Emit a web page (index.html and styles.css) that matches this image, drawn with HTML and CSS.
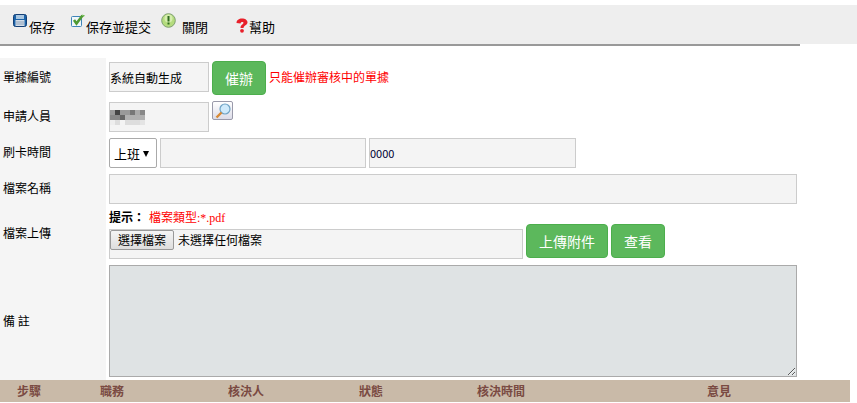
FILE: index.html
```html
<!DOCTYPE html>
<html lang="zh-Hant">
<head>
<meta charset="utf-8">
<title>單據</title>
<link rel="stylesheet" href="styles.css">
</head>
<body>
<div class="toolbar">
  <a class="tool tool-save">
    <svg class="ico" width="14" height="13" viewBox="0 0 14 13"><rect x="0.500" y="0.500" width="13" height="12" rx="2" fill="#1a62a8" stroke="#143f75"/><rect x="3" y="1" width="8" height="4" fill="#a9c6e0"/><rect x="2.500" y="6" width="9" height="6" fill="#d3dde8"/><path d="M3 8h8M3 10h8" stroke="#8ea2ba"/></svg><span>保存</span>
  </a>
  <a class="tool tool-submit">
    <svg class="ico" width="14" height="13" viewBox="0 0 14 13"><rect x="0.500" y="2.500" width="10" height="10" rx="1" fill="#f1f7fb" stroke="#3f85b8"/><path d="M3 6l2.500 3.500L11.500 1.500" fill="none" stroke="#4f9a32" stroke-width="2.600"/><path d="M11 0.500L14 1.500 12.500 3z" fill="#6bbb4a"/></svg><span>保存並提交</span>
  </a>
  <a class="tool tool-close">
    <svg class="ico" width="15" height="15" viewBox="0 0 15 15"><circle cx="7.500" cy="7.500" r="6.800" fill="#b4dc7e" stroke="#7f9f70"/><circle cx="7.500" cy="5.500" r="4" fill="#d5edae"/><rect x="6.500" y="3" width="2" height="5.500" fill="#2f6b1e"/><rect x="6.500" y="9.500" width="2" height="2" fill="#2f6b1e"/></svg><span>關閉</span>
  </a>
  <a class="tool tool-help">
    <svg class="ico" width="12" height="15" viewBox="0 0 12 15"><path d="M0.500 5C0.500 2 3 0.500 6 0.500s5.500 1.500 5.500 4C11.500 7 7.500 7.500 7.500 10H4.500C4.500 6.500 7.500 6.500 7.500 4.800 7.500 3.800 5 3.600 4.500 5.500z" fill="#e8202a"/><circle cx="6" cy="12.800" r="1.900" fill="#e8202a"/></svg><span>幫助</span>
  </a>
</div>
<div class="rule"></div>

<div class="form">
  <div class="label row-a">單據編號</div>
  <div class="field row-a">
    <div class="box box-short">系統自動生成</div>
    <button class="btn btn-urge" type="button">催辦</button>
    <span class="note">只能催辦審核中的單據</span>
  </div>

  <div class="label row-b">申請人員</div>
  <div class="field row-b">
    <div class="box box-short box-name">
      <svg class="blur" width="35" height="15" viewBox="0 0 35 15"><rect width="5" height="5" fill="#999"/><rect x="5" width="5" height="5" fill="#444"/><rect x="10" width="10" height="5" fill="#999"/><rect x="20" width="5" height="5" fill="#777"/><rect x="25" width="5" height="5" fill="#aaa"/><rect x="30" width="5" height="5" fill="#888"/><rect y="5" width="10" height="5" fill="#888"/><rect x="10" y="5" width="5" height="5" fill="#666"/><rect x="15" y="5" width="20" height="5" fill="#b0b0b0"/><rect y="10" width="5" height="5" fill="#eee"/><rect x="5" y="10" width="5" height="5" fill="#ddd"/><rect x="15" y="10" width="15" height="5" fill="#ddd"/><rect x="30" y="10" width="5" height="5" fill="#e4e4e4"/></svg>
    </div>
    <button class="lookup" type="button" aria-label="查找">
      <svg width="19" height="17" viewBox="0 0 19 17"><circle cx="12" cy="7" r="5" fill="#cfeafb" stroke="#6fa3c4" stroke-width="1.200"/><path d="M8.500 10.500L3.500 15.500" stroke="#d88a35" stroke-width="2.400"/></svg>
    </button>
  </div>

  <div class="label row-c">刷卡時間</div>
  <div class="field row-c">
    <div class="select">上班<span class="caret"></span></div>
    <div class="box box-date"></div>
    <div class="box box-time">0000</div>
  </div>

  <div class="label row-d">檔案名稱</div>
  <div class="field row-d"><div class="box box-full"></div></div>

  <div class="label row-e">檔案上傳</div>
  <div class="field row-e">
    <div class="hint"><b class="hint-bold">提示：</b><span class="hint-red">檔案類型:*.pdf</span></div>
    <div class="upload">
      <div class="box box-file"><span class="file-btn">選擇檔案</span><span class="file-text">未選擇任何檔案</span></div>
      <button class="btn btn-upload" type="button">上傳附件</button>
      <button class="btn btn-view" type="button">查看</button>
    </div>
  </div>

  <div class="label row-f">備 註</div>
  <div class="field row-f"><textarea class="memo"></textarea></div>
</div>

<div class="steps">
  <span class="c1">步驟</span><span class="c2">職務</span><span class="c3">核決人</span><span class="c4">狀態</span><span class="c5">核決時間</span><span class="c6">意見</span>
</div>
</body>
</html>
```
FILE: styles.css
```css
* { box-sizing: border-box; }
html, body { margin: 0; padding: 0; height: 403px; overflow: hidden; background: #fff; }
body { padding-top: 5px; font-family: "Noto Sans CJK TC", "Liberation Sans", sans-serif; font-size: 12px; color: #000; }

.toolbar { height: 39px; width: 857px; background: #eee; display: flex; font-size: 13px; }
.rule { width: 800px; height: 2px; background: #999; }
.tool { display: flex; align-items: flex-start; color: #000; white-space: nowrap; }
.tool span { line-height: 16px; }
.tool-save { margin-left: 13px; padding-top: 9px; }
.tool-save span { margin-top: 5px; margin-left: 2px; }
.tool-submit { margin-left: 16px; padding-top: 9px; }
.tool-submit span { margin-top: 5px; margin-left: 1px; }
.tool-close { margin-left: 10px; padding-top: 8px; }
.tool-close span { margin-top: 6px; margin-left: 6px; }
.tool-help { margin-left: 28px; padding-top: 13px; }
.tool-help span { margin-top: 1px; margin-left: 1px; }
.ico { flex: none; display: block; }

.form { display: grid; grid-template-columns: 106px 1fr; margin-top: 12px; width: 857px; }
.label { background: #f5f5f5; padding-left: 3px; display: flex; align-items: center; }
.field { padding-left: 3px; min-width: 0; display: flex; align-items: flex-start; }

.row-a { height: 44px; }
.row-b { height: 36px; }
.row-c { height: 36px; }
.row-d { height: 37px; }
.row-e { height: 54px; }
.row-f { height: 115px; }
.label.row-a { padding-bottom: 8px; }
.label.row-b { padding-bottom: 10px; }
.label.row-c { padding-bottom: 10px; }
.label.row-d { padding-bottom: 10px; }
.label.row-e { padding-bottom: 12px; }
.label.row-f { padding-bottom: 4px; }
.field.row-a { padding-top: 4px; }

.box { border: 1px solid #ccc; background: #f4f4f4; height: 30px; display: flex; align-items: center; flex: none; }
.box-short { width: 100px; }
.box-date { width: 206px; margin-left: 3px; }
.box-time { width: 207px; margin-left: 3px; color: #003; font-size: 11px; }
.box-full { width: 688px; }
.box-file { width: 414px; align-items: flex-start; padding: 0; }

.btn { background: #5cb85c; border: 1px solid #4cae4c; border-radius: 4px; color: #fff; font: inherit; font-size: 14px; height: 34px; padding: 0; flex: none; }
.btn-urge { width: 54px; margin-left: 3px; margin-top: -1px; }
.note { color: #f00; margin-left: 3px; line-height: 30px; }

.lookup { width: 21px; height: 19px; margin: -1px 0 0 3px; padding: 0; background: linear-gradient(#fff, #dcdce8); border: 1px solid #9a9aaa; border-radius: 2px; display: flex; align-items: center; justify-content: center; flex: none; }
.blur { display: block; }

.select { width: 48px; height: 30px; border: 1px solid #aaa; border-radius: 2px; background: #fff; display: flex; align-items: center; padding-left: 4px; font-size: 13px; position: relative; flex: none; }
.caret { position: absolute; right: 7px; top: 12px; border-left: 3.500px solid transparent; border-right: 3.500px solid transparent; border-top: 6px solid #000; }

.row-e.field { flex-direction: column; }
.hint { line-height: 14px; height: 19px; margin-top: -1px; font-family: "Liberation Serif", "Noto Sans CJK TC", serif; }
.hint-bold { font-family: "Noto Sans CJK TC", sans-serif; }
.hint-red { color: #f00; margin-left: 4px; }
.upload { display: flex; align-items: flex-start; }
.btn-upload { width: 82px; margin-left: 3px; margin-top: -5px; }
.btn-view { width: 54px; margin-left: 3px; margin-top: -5px; }
.file-btn { display: inline-block; height: 20px; width: 64px; background: linear-gradient(#f5f5f5, #ddd); border: 1px solid #999; border-radius: 2px; text-align: center; line-height: 18px; }
.file-text { margin-left: 4px; line-height: 20px; }

.memo { display: block; width: 688px; height: 112px; background: #dfe3e4; border: 1px solid #aaa; padding: 0; margin: 0; resize: both; outline: none; }

.steps { width: 850px; height: 22px; background: #c9baa8; color: #7a4a42; font-weight: bold; display: flex; line-height: 22px; }
.steps span { display: block; flex: none; }
.c1 { margin-left: 17px; width: 83px; }
.c2 { width: 128px; }
.c3 { width: 131px; }
.c4 { width: 118px; }
.c5 { width: 230px; }
.c6 { width: 30px; }
```
